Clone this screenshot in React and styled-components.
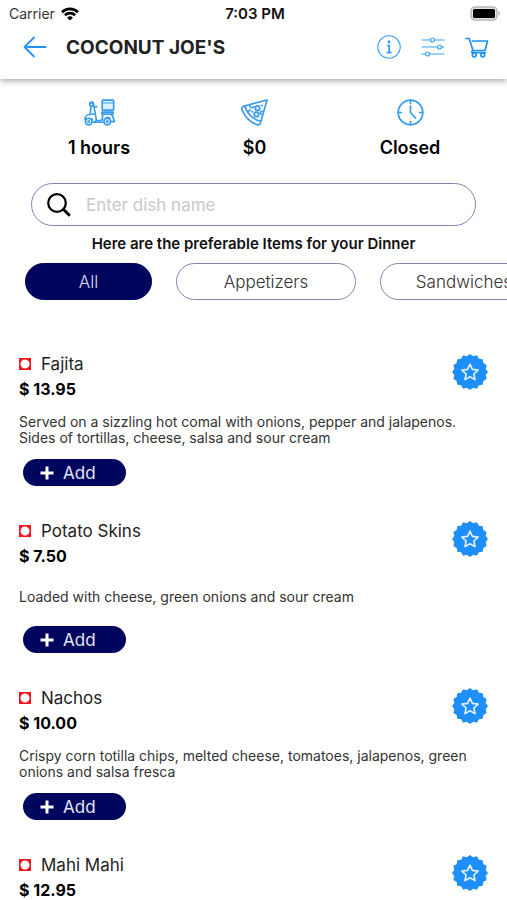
import React, { useState } from "react";
import styled, { createGlobalStyle } from "styled-components";

const categories = [
   { name: "All", width: 127 },
   { name: "Appetizers", width: 180 },
   { name: "Sandwiches", width: 168 },
];

const dishes = [
   {
      name: "Fajita",
      price: "13.95",
      text: "Served on a sizzling hot comal with onions, pepper and jalapenos. Sides of tortillas, cheese, salsa and sour cream",
   },
   {
      name: "Potato Skins",
      price: "7.50",
      text: "Loaded with cheese, green onions and sour cream",
   },
   {
      name: "Nachos",
      price: "10.00",
      text: "Crispy corn totilla chips, melted cheese, tomatoes, jalapenos, green onions and salsa fresca",
   },
   { name: "Mahi Mahi", price: "12.95", text: "" },
];

// edge of the round badge, 16 small teeth
const badgePoints = Array.from({ length: 32 }, (_, i) => {
   const r = i % 2 ? 16 : 18;
   const a = (Math.PI * i) / 16;
   return `${(18 + r * Math.sin(a)).toFixed(2)},${(18 - r * Math.cos(a)).toFixed(2)}`;
}).join(" ");

const WifiIcon = () => (
   <svg width="18" height="14" viewBox="0 0 18 14" fill="none" stroke="#000" strokeWidth="2.6">
      <path d="M1 5.2a11.4 11.4 0 0 1 16 0" />
      <path d="M3.9 8.2a7.3 7.3 0 0 1 10.2 0" />
      <path d="M9 13.6 6.1 10.7a4.1 4.1 0 0 1 5.8 0z" fill="#000" stroke="none" />
   </svg>
);

const BatteryIcon = () => (
   <svg width="31" height="15" viewBox="0 0 31 15">
      <rect x="1" y="1" width="26" height="13" rx="4" fill="#e4e4e4" stroke="#b5b5b5" strokeWidth="1.4" />
      <rect x="3" y="3" width="22" height="9" rx="1.5" fill="#000" />
      <path d="M28.5 5.2c2 .8 2 3.800 0 4.600z" fill="#b5b5b5" />
   </svg>
);

const BackIcon = () => (
   <svg width="24" height="22" viewBox="0 0 24 22" fill="none" stroke="#2491f8" strokeWidth="1.8" strokeLinecap="round" strokeLinejoin="round">
      <path d="M22.500 11H1.500M11 1.500 1.500 11l9.500 9.500" />
   </svg>
);

const InfoIcon = () => (
   <svg width="24" height="24" viewBox="0 0 24 24" fill="none" stroke="#2e9bf3">
      <circle cx="12" cy="12" r="11.2" strokeWidth="1.1" />
      <circle cx="12" cy="6.700" r="1.500" fill="#2e9bf3" stroke="none" />
      <path d="M10 10.500h2.200v7M9.700 17.700h4.800" strokeWidth="1.700" />
   </svg>
);

const FilterIcon = () => (
   <svg width="24" height="20" viewBox="0 0 24 20" fill="none" stroke="#3aa3f5" strokeWidth="1.200">
      <path d="M.5 3h9M13.500 3h10M.5 10h16M20.500 10h3M.5 17h4M8.500 17h15" />
      <circle cx="11.500" cy="3" r="2" />
      <circle cx="18.500" cy="10" r="2" />
      <circle cx="6.500" cy="17" r="2" />
   </svg>
);

const CartIcon = () => (
   <svg width="24" height="21" viewBox="0 0 24 21" fill="none" stroke="#1d93fa" strokeWidth="1.700" strokeLinejoin="round" strokeLinecap="round">
      <path d="M1 1.500h3.200L8 13.500h12l2.500-9.500H7.500" />
      <path d="M8 13.500c-1.500 0-1.800 2.200 0 2.200h12" />
      <circle cx="9.200" cy="18" r="1.900" fill="#fff" />
      <circle cx="17.800" cy="18" r="1.900" fill="#fff" />
   </svg>
);

const ScooterIcon = () => (
   <svg width="31" height="27" viewBox="0 0 92 80" fill="none" stroke="#369bee" strokeWidth="5" strokeLinejoin="round" strokeLinecap="round">
      <rect x="54" y="3" width="34" height="30" rx="3" fill="#d9f0fd" />
      <path d="M56 12h30" strokeWidth="3" />
      <path d="M53 39h33v6H57c-4 0-5-3-4-6z" />
      <path d="M55 46v10c0 5-3 8-8 8h-9M82 46c4 6 7 13 8 21h-8" />
      <path d="M66 55h10" />
      <circle cx="22" cy="16" r="5" />
      <path d="M18 11c4-3 9-2 10 2l8 45c1 5-1 10-6 10M29 23h9M21 22l-3 25M28 45c-12-2-23 3-26 14h22" />
      <path d="M29 69h27" />
      <circle cx="14" cy="67" r="10" fill="#d9eefc" />
      <circle cx="14" cy="67" r="3" strokeWidth="3" />
      <circle cx="69" cy="67" r="10" fill="#d9eefc" />
      <circle cx="69" cy="67" r="3" strokeWidth="3" />
   </svg>
);

const PizzaIcon = () => (
   <svg width="27" height="27" viewBox="0 0 82 82" fill="none" stroke="#369bee" strokeWidth="5" strokeLinejoin="round" strokeLinecap="round">
      <path d="M79 3 8 22c-6 2-7 8-4 13 9 21 25 36 45 43 5 2 9-1 10-5z" />
      <path d="M13 22c2 18 21 39 45 45M8 23c4-1 7 2 8 7M20 40l8-7" />
      <circle cx="50" cy="28" r="7" fill="#d9f0fd" />
      <circle cx="47" cy="47" r="7" fill="#d9f0fd" />
      <path d="M27 20c0 6 7 9 12 4M33 38l2 1M64 37c-5 0-7 5-3 9M62 19l2 1" />
   </svg>
);

const ClockIcon = () => (
   <svg width="27" height="27" viewBox="0 0 27 27" fill="none" stroke="#369bee" strokeWidth="1.700" strokeLinecap="round">
      <circle cx="13.500" cy="13.500" r="12.300" />
      <path d="M13.500 1.500v3M13.500 22.500v3M1.500 13.500h3M22.500 13.500h3M13.500 7v6.500l5 5.500" />
   </svg>
);

const SearchIcon = () => (
   <svg width="24" height="24" viewBox="0 0 24 24" fill="none" stroke="#000" strokeWidth="2.200">
      <circle cx="10" cy="10" r="8.800" />
      <path d="m16.300 16.300 6.500 6.500" strokeWidth="2.800" />
   </svg>
);

const PlusIcon = () => (
   <svg width="14" height="14" viewBox="0 0 14 14" stroke="#fff" strokeWidth="3">
      <path d="M7 .5v13M.5 7h13" />
   </svg>
);

const BadgeIcon = () => (
   <svg width="36" height="36" viewBox="0 0 36 36">
      <polygon points={badgePoints} fill="#1e8ffa" />
      <path
         d="m18 10.200 2.400 5.200 5.700.7-4.200 3.900 1.100 5.600-5-2.800-5 2.800 1.100-5.600-4.200-3.900 5.700-.7z"
         fill="none"
         stroke="#e6f3ff"
         strokeWidth="1.600"
         strokeLinejoin="round"
      />
   </svg>
);

const Dish = ({ name, price, text }) => (
   <StyledDish>
      <DishTop>
         <div>
            <DishName>
               <Marker />
               {name}
            </DishName>
            <Price>$ {price}</Price>
         </div>
         <IconButton aria-label={`Favourite ${name}`}>
            <BadgeIcon />
         </IconButton>
      </DishTop>
      <DishText>{text}</DishText>
      <AddButton>
         <PlusIcon />
         Add
      </AddButton>
   </StyledDish>
);

const App = () => {
   const [active, setActive] = useState("All");
   const [search, setSearch] = useState("");

   return (
      <Screen>
         <GlobalStyle />
         <Header>
            <StatusBar>
               <Carrier>
                  Carrier <WifiIcon />
               </Carrier>
               <Time>7:03 PM</Time>
               <BatteryIcon />
            </StatusBar>
            <NavBar>
               <IconButton aria-label="Back">
                  <BackIcon />
               </IconButton>
               <Title>COCONUT JOE'S</Title>
               <NavActions>
                  <IconButton aria-label="Info">
                     <InfoIcon />
                  </IconButton>
                  <IconButton aria-label="Filter">
                     <FilterIcon />
                  </IconButton>
                  <IconButton aria-label="Cart">
                     <CartIcon />
                  </IconButton>
               </NavActions>
            </NavBar>
         </Header>

         <Facts>
            <Fact>
               <ScooterIcon />
               1 hours
            </Fact>
            <Fact>
               <PizzaIcon />
               $0
            </Fact>
            <Fact>
               <ClockIcon />
               Closed
            </Fact>
         </Facts>

         <SearchBox>
            <SearchIcon />
            <SearchInput
               aria-label="Enter dish name"
               placeholder="Enter dish name"
               value={search}
               onChange={(e) => setSearch(e.target.value)}
            />
         </SearchBox>

         <Intro>Here are the preferable Items for your Dinner</Intro>

         <Categories>
            {categories.map((item) => (
               <Chip
                  key={item.name}
                  $width={item.width}
                  $active={item.name === active}
                  onClick={() => setActive(item.name)}
               >
                  {item.name}
               </Chip>
            ))}
         </Categories>

         <DishList>
            {dishes.map((dish) => (
               <Dish key={dish.name} {...dish} />
            ))}
         </DishList>
      </Screen>
   );
};

const GlobalStyle = createGlobalStyle`
   * {
      box-sizing: border-box;
   }
   body {
      margin: 0;
      background: #fff;
      color: #111;
      font-family: Inter, "Open Sans", sans-serif;
   }
   button,
   input {
      font-family: inherit;
   }
   svg {
      display: block;
      flex-shrink: 0;
   }
`;

const Screen = styled.div`
   display: flex;
   flex-direction: column;
   height: 100vh;
   overflow: hidden;
`;

const Header = styled.header`
   flex-shrink: 0;
   box-shadow: 0 2px 6px rgba(0, 0, 0, 0.35);
`;

const StatusBar = styled.div`
   display: grid;
   grid-template-columns: 1fr auto 1fr;
   align-items: center;
   height: 27px;
   padding: 0 6px 0 9px;
   font-size: 14px;

   > svg {
      justify-self: end;
   }
`;

const Carrier = styled.div`
   display: flex;
   align-items: center;
   gap: 6px;
   color: #333;
`;

const Time = styled.div`
   font-size: 15px;
   font-weight: 600;
`;

const NavBar = styled.div`
   display: flex;
   align-items: center;
   height: 52px;
   padding: 0 18px 12px 23px;
`;

const IconButton = styled.button`
   padding: 0;
   border: none;
   background: none;
   cursor: pointer;
`;

const Title = styled.h1`
   flex: 1;
   margin: 0 0 0 19px;
   font-size: 19px;
   font-weight: 700;
   color: #222;
`;

const NavActions = styled.div`
   display: flex;
   align-items: center;
   gap: 20px;
`;

const Facts = styled.div`
   display: flex;
   flex-shrink: 0;
   justify-content: space-between;
   padding: 20px 32px 0 34px;
`;

const Fact = styled.div`
   display: flex;
   flex-direction: column;
   align-items: center;
   gap: 10px;
   width: 130px;
   font-size: 18px;
   font-weight: 600;
   line-height: 24px;
   color: #000;
`;

const SearchBox = styled.label`
   display: flex;
   flex-shrink: 0;
   align-items: center;
   gap: 15px;
   height: 43px;
   margin: 23px 31px 0;
   padding: 0 15px;
   border: 1px solid #8583b5;
   border-radius: 22px;
`;

const SearchInput = styled.input`
   flex: 1;
   min-width: 0;
   padding: 0;
   border: none;
   outline: none;
   background: none;
   font-size: 17px;

   &::placeholder {
      color: #c8c8c8;
      opacity: 1;
   }
`;

const Intro = styled.p`
   flex-shrink: 0;
   margin: 8px 0 9px;
   font-size: 15px;
   font-weight: 600;
   line-height: 20px;
   text-align: center;
`;

const Categories = styled.div`
   display: flex;
   flex-shrink: 0;
   gap: 24px;
   padding-left: 25px;
   overflow-x: auto;
   scrollbar-width: none;
`;

const Chip = styled.button`
   flex-shrink: 0;
   width: ${({ $width }) => $width}px;
   height: 37px;
   border: 1px solid ${({ $active }) => ($active ? "#00055e" : "#8583b5")};
   border-radius: 19px;
   background: ${({ $active }) => ($active ? "#00055e" : "#fff")};
   color: ${({ $active }) => ($active ? "#dcdcf0" : "#333")};
   font-size: 17px;
   font-weight: 300;
   cursor: pointer;
`;

const DishList = styled.div`
   flex: 1;
   min-height: 0;
   margin-top: 50px;
   padding: 0 19px;
   overflow-y: auto;
   scrollbar-width: none;
`;

const StyledDish = styled.article`
   padding-bottom: 31px;
`;

const DishTop = styled.div`
   display: flex;
   align-items: flex-start;
   justify-content: space-between;
   height: 50px;

   ${IconButton} {
      margin-top: 4px;
   }
`;

const DishName = styled.h2`
   display: flex;
   align-items: center;
   gap: 10px;
   margin: 0;
   font-size: 17px;
   font-weight: 400;
   line-height: 28px;
   color: #222;
`;

const Marker = styled.span`
   width: 12px;
   height: 12px;
   background: radial-gradient(circle, #fff 4px, #f5141c 5px);
`;

const Price = styled.div`
   font-size: 16px;
   font-weight: 700;
   line-height: 22px;
   color: #000;
`;

const DishText = styled.p`
   display: flex;
   align-items: center;
   height: 59px;
   margin: 0;
   padding-right: 16px;
   font-size: 14px;
   line-height: 16px;
   color: #333;
`;

const AddButton = styled.button`
   display: flex;
   align-items: center;
   gap: 9px;
   width: 103px;
   height: 27px;
   margin-left: 4px;
   padding: 0 17px;
   border: none;
   border-radius: 14px;
   background: #00055e;
   color: #e4e4f4;
   font-size: 17px;
   cursor: pointer;
`;

export default App;
